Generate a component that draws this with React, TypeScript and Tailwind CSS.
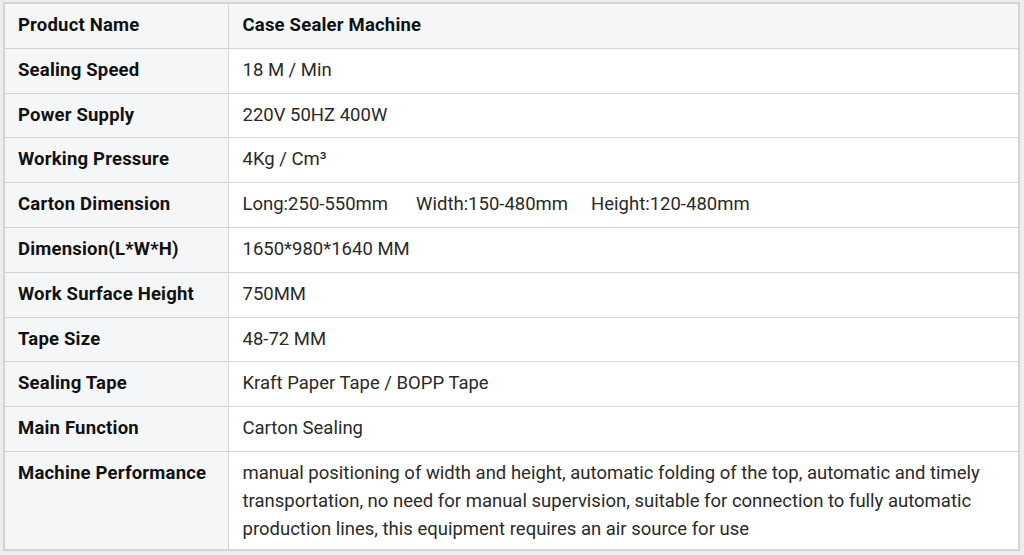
const rows: [string, string][] = [
  ["Sealing Speed", "18 M / Min"],
  ["Power Supply", "220V 50HZ 400W"],
  ["Working Pressure", "4Kg / Cm³"],
  ["Carton Dimension", ""],
  ["Dimension(L*W*H)", "1650*980*1640 MM"],
  ["Work Surface Height", "750MM"],
  ["Tape Size", "48-72 MM"],
  ["Sealing Tape", "Kraft Paper Tape / BOPP Tape"],
  ["Main Function", "Carton Sealing"],
  [
    "Machine Performance",
    "manual positioning of width and height, automatic folding of the top, automatic and timely transportation, no need for manual supervision, suitable for connection to fully automatic production lines, this equipment requires an air source for use",
  ],
];

export default function App() {
  return (
    <div
      className="w-[1024px] h-[555px] bg-[#ededed] pl-[3px] pt-[2px] overflow-hidden"
      style={{ fontFamily: "Roboto, 'Liberation Sans', sans-serif" }}
    >
      <table className="w-[1017px] border-collapse border-2 border-[#d4d4d4] text-[18.5px] leading-[28px]">
        <tbody>
          <tr className="bg-[#f5f6f8]">
            <td className="w-[224px] border border-[#d4d4d4] px-[13px] align-top pt-[7px] pb-[8.8px] font-bold tracking-[0.2px] text-[#111]">
              Product Name
            </td>
            <td className="border border-[#d4d4d4] px-[14px] align-top pt-[7px] pb-[8.8px] font-bold tracking-[0.2px] text-[#111]">
              Case Sealer Machine
            </td>
          </tr>
          {rows.map(([label, value], i) => {
            const last = i === rows.length - 1;
            return (
              <tr key={label}>
                <td
                  className={`bg-[#f5f6f8] border border-[#d4d4d4] px-[13px] align-top pt-[7px] font-bold tracking-[0.2px] text-[#111] ${
                    last ? "pb-[6px]" : "pb-[8.8px]"
                  }`}
                >
                  {label}
                </td>
                <td
                  className={`bg-white border border-[#d4d4d4] px-[14px] align-top pt-[7px] text-[#2a2a2a] ${
                    last ? "pb-[6px]" : "pb-[8.8px]"
                  }`}
                >
                  {label === "Carton Dimension" ? (
                    <span className="flex">
                      <span>Long:250-550mm</span>
                      <span className="ml-[28px]">Width:150-480mm</span>
                      <span className="ml-[23px]">Height:120-480mm</span>
                    </span>
                  ) : (
                    value
                  )}
                </td>
              </tr>
            );
          })}
        </tbody>
      </table>
    </div>
  );
}
